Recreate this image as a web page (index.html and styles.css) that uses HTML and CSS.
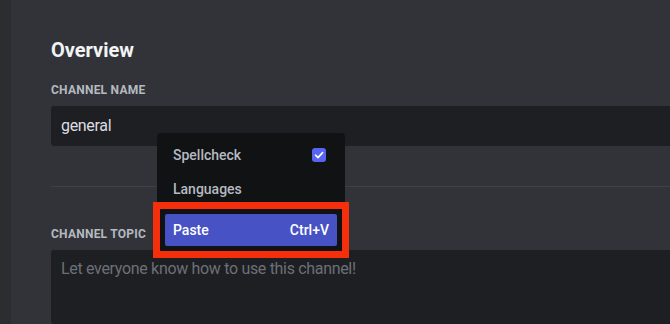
FILE: index.html
```html
<!DOCTYPE html>
<html>
<head>
<meta charset="utf-8">
<link rel="stylesheet" href="styles.css">
</head>
<body>
<div class="app">
  <div class="sidebar"></div>
  <main class="content">
    <h2 class="title">Overview</h2>
    <label class="label">Channel Name</label>
    <div class="input">general</div>
    <div class="divider"></div>
    <label class="label">Channel Topic</label>
    <div class="textarea">Let everyone know how to use this channel!</div>
  </main>
</div>
<div class="menu">
  <div class="item">
    <span>Spellcheck</span>
    <span class="check"><svg width="10" height="10" viewBox="0 0 10 10"><path d="M1.5 5.2 L4 7.6 L8.6 2.6" fill="none" stroke="#fff" stroke-width="1.6" stroke-linecap="round" stroke-linejoin="round"/></svg></span>
  </div>
  <div class="item"><span>Languages</span></div>
  <div class="sep"></div>
  <div class="item active"><span>Paste</span><span class="hint">Ctrl+V</span></div>
</div>
<div class="highlight"></div>
</body>
</html>
```
FILE: styles.css
```css
html, body {
  margin: 0;
  padding: 0;
  width: 670px;
  height: 324px;
  overflow: hidden;
  background: #313338;
  font-family: Roboto, "Noto Sans", sans-serif;
}
.app {
  display: flex;
  height: 324px;
}
.sidebar {
  width: 11px;
  flex: none;
  background: #2b2d31;
}
.content {
  flex: 1;
  padding: 38px 0 0 40px;
  display: flex;
  flex-direction: column;
}
.title {
  margin: 0 0 20px;
  font-size: 20px;
  line-height: 24px;
  font-weight: 700;
  color: #f2f3f5;
}
.label {
  display: block;
  font-size: 12px;
  line-height: 16px;
  font-weight: 700;
  letter-spacing: 0.02em;
  text-transform: uppercase;
  color: #b5bac1;
  margin-bottom: 8px;
}
.input {
  height: 40px;
  box-sizing: border-box;
  background: #1e1f22;
  border-radius: 3px 0 0 3px;
  padding: 0 10px;
  font-size: 16px;
  line-height: 40px;
  letter-spacing: -0.02em;
  color: #dbdee1;
}
.divider {
  height: 1px;
  background: #3f4147;
  margin: 40px 0 40px;
}
.textarea {
  height: 120px;
  background: #1e1f22;
  border-radius: 3px 0 0 3px;
  padding: 9px 10px;
  font-size: 16px;
  line-height: 20px;
  letter-spacing: -0.02em;
  color: #6d6f78;
}
.menu {
  position: absolute;
  left: 157px;
  top: 131px;
  width: 188px;
  box-sizing: border-box;
  padding: 6px 8px;
  background: #111214;
  border-radius: 4px;
  display: flex;
  flex-direction: column;
  gap: 2px;
  margin-top: 2px;
}
.menu .item {
  height: 32px;
  padding: 0 8px;
  display: flex;
  align-items: center;
  justify-content: space-between;
  font-size: 14px;
  font-weight: 500;
  color: #b5bac1;
  border-radius: 2px;
}
.menu .sep {
  height: 1px;
  margin: 2px 4px;
  background: #111214;
}
.menu .item.active {
  background: #4752c4;
  color: #fff;
}
.hint {
  font-weight: 500;
}
.check {
  width: 14px;
  height: 14px;
  border-radius: 3px;
  background: #5865f2;
  display: flex;
  align-items: center;
  justify-content: center;
  margin-right: 3px;
}
.highlight {
  position: absolute;
  left: 153px;
  top: 202px;
  width: 196px;
  height: 56px;
  box-sizing: border-box;
  border: 7px solid #f52f0c;
}
```
